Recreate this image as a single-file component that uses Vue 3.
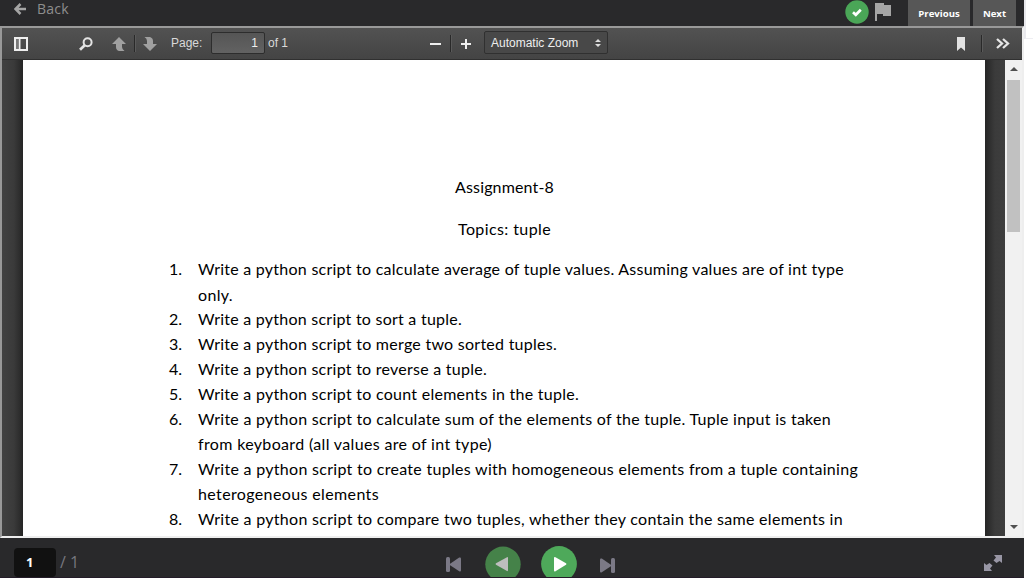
<script setup>
import { ref } from 'vue'

const page = ref('1')
const headings = [
  { text: 'Assignment-8', width: 99 },
  { text: 'Topics: tuple', width: 93 }
]
const questions = [
  [
    { text: 'Write a python script to calculate average of tuple values. Assuming values are of int type', width: 646 },
    { text: 'only.', width: 35 }
  ],
  [{ text: 'Write a python script to sort a tuple.', width: 264 }],
  [{ text: 'Write a python script to merge two sorted tuples.', width: 359 }],
  [{ text: 'Write a python script to reverse a tuple.', width: 289 }],
  [{ text: 'Write a python script to count elements in the tuple.', width: 381 }],
  [
    { text: 'Write a python script to calculate sum of the elements of the tuple. Tuple input is taken', width: 633 },
    { text: 'from keyboard (all values are of int type)', width: 294 }
  ],
  [
    { text: 'Write a python script to create tuples with homogeneous elements from a tuple containing', width: 660 },
    { text: 'heterogeneous elements', width: 181 }
  ],
  [{ text: 'Write a python script to compare two tuples, whether they contain the same elements in', width: 645 }]
]

// Tracks each line out to the width given by the document's layout.
const vFit = {
  mounted(el, { value }) {
    const natural = el.getBoundingClientRect().width
    el.style.letterSpacing = `${(value - natural) / el.textContent.length}px`
  }
}
</script>

<template>
  <div class="app">
    <div class="shell">
      <header class="topbar">
        <a class="back">
          <svg width="12" height="12" viewBox="0 0 12 12"><path d="M6.5 1 1.5 6l5 5M1.8 6H12" fill="none" stroke="#a5a5a5" stroke-width="2.5" /></svg>
          <span>Back</span>
        </a>
        <svg class="done" width="24" height="24" viewBox="0 0 24 24"><circle cx="12" cy="12" r="11.7" fill="#4aa657" /><path d="m8 12.2 2.8 2.6 5-5" fill="none" stroke="#fff" stroke-width="2.7" /></svg>
        <svg class="flag" width="16" height="18" viewBox="0 0 16 18"><path d="M0 0H9V2H16V13H8V11H2V18H0Z" fill="#a5a5a5" /></svg>
        <button class="nav prev">Previous</button>
        <button class="nav next">Next</button>
      </header>

      <main class="frame">
        <div class="toolbar">
          <svg class="i-side" width="14" height="14" viewBox="0 0 14 14"><path d="M1 1H13V13H1ZM5.5 1V13" fill="none" stroke="#eee" stroke-width="2" /><path d="M2 2H4.5V12H2Z" fill="#777" /></svg>
          <svg class="i-find" width="14" height="14" viewBox="0 0 14 14"><circle cx="8.6" cy="5.2" r="4" fill="none" stroke="#e4e4e4" stroke-width="2" /><path d="M5.7 8.2 1 12.8" stroke="#e4e4e4" stroke-width="2.7" /></svg>
          <svg class="i-up" width="14" height="14" viewBox="0 0 14 14"><path d="M7 0 14 7H10V10Q10 12 12.5 14H7Q4 13 4 10V7H0Z" fill="#a0a0a0" /></svg>
          <i class="sep"></i>
          <svg class="i-down" width="14" height="14" viewBox="0 0 14 14"><path d="M1.5 0H7Q10 1 10 4V7H14L7 14 0 7H4V4Q4 1.5 1.5 0Z" fill="#a0a0a0" /></svg>
          <span class="label">Page:</span>
          <span class="pagebox">{{ page }}</span>
          <span class="total">of 1</span>
          <svg class="i-minus" width="11" height="11" viewBox="0 0 11 11"><path d="M0 5H11" stroke="#eee" stroke-width="2" /></svg>
          <i class="sep s2"></i>
          <svg class="i-plus" width="10" height="10" viewBox="0 0 10 10"><path d="M0 5H10M5 0V10" stroke="#eee" stroke-width="2" /></svg>
          <span class="select">Automatic Zoom
            <svg width="6" height="8" viewBox="0 0 6 8"><path d="M0 3 3 0 6 3ZM0 5H6L3 8Z" fill="#ddd" /></svg>
          </span>
          <svg class="i-mark" width="8" height="14" viewBox="0 0 8 14"><path d="M0 0H8V14L4 10.5 0 14Z" fill="#e2e2e2" /></svg>
          <i class="sep s3"></i>
          <svg class="i-more" width="14" height="11" viewBox="0 0 14 11"><path d="m1 1 5 4.5-5 4.5M7 1l5 4.5L7 10" fill="none" stroke="#e6e6e6" stroke-width="2.3" /></svg>
        </div>

        <div class="viewer">
          <article class="paper">
            <h1><span v-fit="headings[0].width">{{ headings[0].text }}</span></h1>
            <h2><span v-fit="headings[1].width">{{ headings[1].text }}</span></h2>
            <div class="list">
              <div v-for="(q, n) in questions" :key="n" class="question">
                <span class="num">{{ n + 1 }}.</span>
                <div>
                  <div v-for="line in q" :key="line.text" class="line"><span v-fit="line.width">{{ line.text }}</span></div>
                </div>
              </div>
            </div>
          </article>
          <div class="scroll">
            <svg width="8" height="4" viewBox="0 0 8 4"><path d="M0 4 4 0 8 4Z" fill="#505050" /></svg>
            <div class="thumb"></div>
            <svg width="8" height="4" viewBox="0 0 8 4"><path d="M0 0H8L4 4Z" fill="#505050" /></svg>
          </div>
        </div>
      </main>

      <footer class="player">
        <span class="current">{{ page }}</span>
        <span class="count">/ 1</span>
        <svg class="first" width="15" height="15" viewBox="0 0 15 15"><g fill="#7b7986"><rect width="4" height="15" rx="1.5" /><path d="M13.2.6Q15 0 15 1.8V13.2Q15 15 13.2 14.3L3 7.5Z" /></g></svg>
        <svg class="rev" width="36" height="36" viewBox="0 0 36 36"><circle cx="18" cy="18.3" r="17.7" fill="#458249" /><path d="M22 11.2Q23 10.8 23 12V24Q23 25.5 22 25L11 18.7Q10 18 11 17.3Z" fill="#bebebe" /></svg>
        <svg class="play" width="36" height="36" viewBox="0 0 36 36"><circle cx="18" cy="18" r="17.9" fill="#4ea95a" /><path d="M13 12Q13 10.4 14.5 11.2L25 17.3Q26 18 25 18.7L14.5 25.3Q13 26 13 24.5Z" fill="#fff" /></svg>
        <svg class="last" width="15" height="15" viewBox="0 0 15 15"><g fill="#7b7986"><rect x="11" width="4" height="15" rx="1.5" /><path d="M1.8.6Q0 0 0 1.8V13.2Q0 15 1.8 14.3L12 7.5Z" /></g></svg>
        <svg class="expand" width="18" height="16" viewBox="0 0 18 16"><path d="M10 0H18V8L15.5 6 12.5 8 9.5 5.5 12 2.5ZM0 8 2.5 10 5.5 8 8.5 10.5 6 13.5 8 16H0Z" fill="#9896a5" /></svg>
      </footer>
    </div>
    <aside class="edge"></aside>
  </div>
</template>

<style>
body { margin: 0; background: #fff; overflow: hidden; }
</style>

<style scoped>
* { box-sizing: border-box; }
svg { display: block; flex: none; }
.app { display: flex; width: 1033px; height: 578px; overflow: hidden; }
.shell { width: 1024px; flex: none; }
.edge { flex: 1; height: 39px; border-left: 2px solid #e9e9ed; border-bottom: 1px solid #eeeef2; }
.topbar { height: 26px; background: #29292b; display: flex; overflow: hidden; }
.back { display: flex; padding-left: 14px; color: #8e8e8e; font: 500 14px/18px "Open Sans", sans-serif; letter-spacing: .2px; }
.back svg { margin: 3px 11px 0 0; }
.back span { width: 34px; }
.done { margin-left: 774px; }
.flag { margin: 3px 0 0 6px; }
.nav { height: 26px; border: 0; padding: 0; background: #575757; color: #fff; font: bold 9.6px/25px "Open Sans", sans-serif; }
.prev { width: 62px; margin-left: 17px; }
.next { width: 43px; margin-left: 3px; }
.frame { height: 512px; border: 2px solid #999; border-right-color: #eee; border-bottom-color: #eee; }
.toolbar { height: 32px; display: flex; align-items: center; background: linear-gradient(#525252, #444); border-bottom: 1px solid #303030; color: #d9d9d9; font: 12px/16px "Liberation Sans", Arial, sans-serif; white-space: nowrap; }
.toolbar > * { flex: none; }
.i-side { margin-left: 12px; }
.i-find { margin-left: 51px; }
.i-up { margin-left: 19px; }
.sep { width: 2px; height: 17px; margin-left: 8px; background: #292929; border-right: 1px solid #5a5a5a; }
.i-down { margin-left: 7px; }
.label { width: 32px; margin: -2px 0 0 14px; }
.pagebox { width: 54px; height: 22px; margin: -1px 0 0 8px; padding: 2px 6px; text-align: right; border: 1px solid #2d2d2d; border-radius: 2px; background: linear-gradient(#555, #626262); color: #eee; }
.total { width: 22px; margin: -2px 0 0 3px; }
.i-minus { margin: 1px 0 0 140px; }
.s2 { margin-left: 9px; }
.i-plus { margin: 1px 0 0 9px; }
.select { width: 124px; height: 23px; margin: -2px 0 0 13px; padding: 0 6px 0 6px; display: flex; align-items: center; justify-content: space-between; border: 1px solid #303030; border-radius: 2px; background: #484848; color: #eee; }
.i-mark { margin-left: 349px; }
.s3 { margin-left: 16px; }
.i-more { margin-left: 13px; }
.viewer { height: 476px; padding-left: 21px; display: flex; justify-content: space-between; overflow: hidden; background: linear-gradient(90deg, #424242, #3a3a3a 12px, #252525 21px, #252525 983px, #3b3b3b 993px, #424242); }
.paper { width: 962px; height: 476px; background: #fff; color: #000; font: 16px/25px Lato, "Open Sans", sans-serif; white-space: nowrap; overflow: hidden; }
.paper h1, .paper h2 { font: inherit; margin: 0; padding-left: 1px; text-align: center; }
.paper h1 { padding-top: 114px; }
.paper h2 { margin-top: 17px; }
.list { margin: 15px 0 0 146px; }
.question { display: flex; }
.num { width: 29px; }
.line { height: 25px; }
.question:first-child .line + .line { position: relative; top: 1px; }
.scroll { width: 17px; background: #f1f1f1; display: flex; flex-direction: column; align-items: center; padding: 7px 0; }
.thumb { width: 13px; height: 152px; margin: 9px 0 auto; background: #c1c1c1; }
.player { height: 40px; display: flex; overflow: hidden; padding-left: 14px; background: #29292b; border-bottom: 1px solid #241c29; }
.current { width: 42px; height: 29px; margin-top: 10px; padding-left: 12px; border-radius: 4px; background: #111; color: #fff; font: bold 13px/29px "Open Sans", sans-serif; }
.count { width: 20px; margin: 12px 0 0 4px; color: #77777f; font: 16px/24px "Open Sans", sans-serif; white-space: nowrap; }
.first { margin: 19px 0 0 366px; }
.rev { margin: 8px 0 0 24px; }
.play { margin: 8px 0 0 20px; }
.last { margin: 20px 0 0 23px; }
.expand { margin: 17px 0 0 369px; }
</style>
